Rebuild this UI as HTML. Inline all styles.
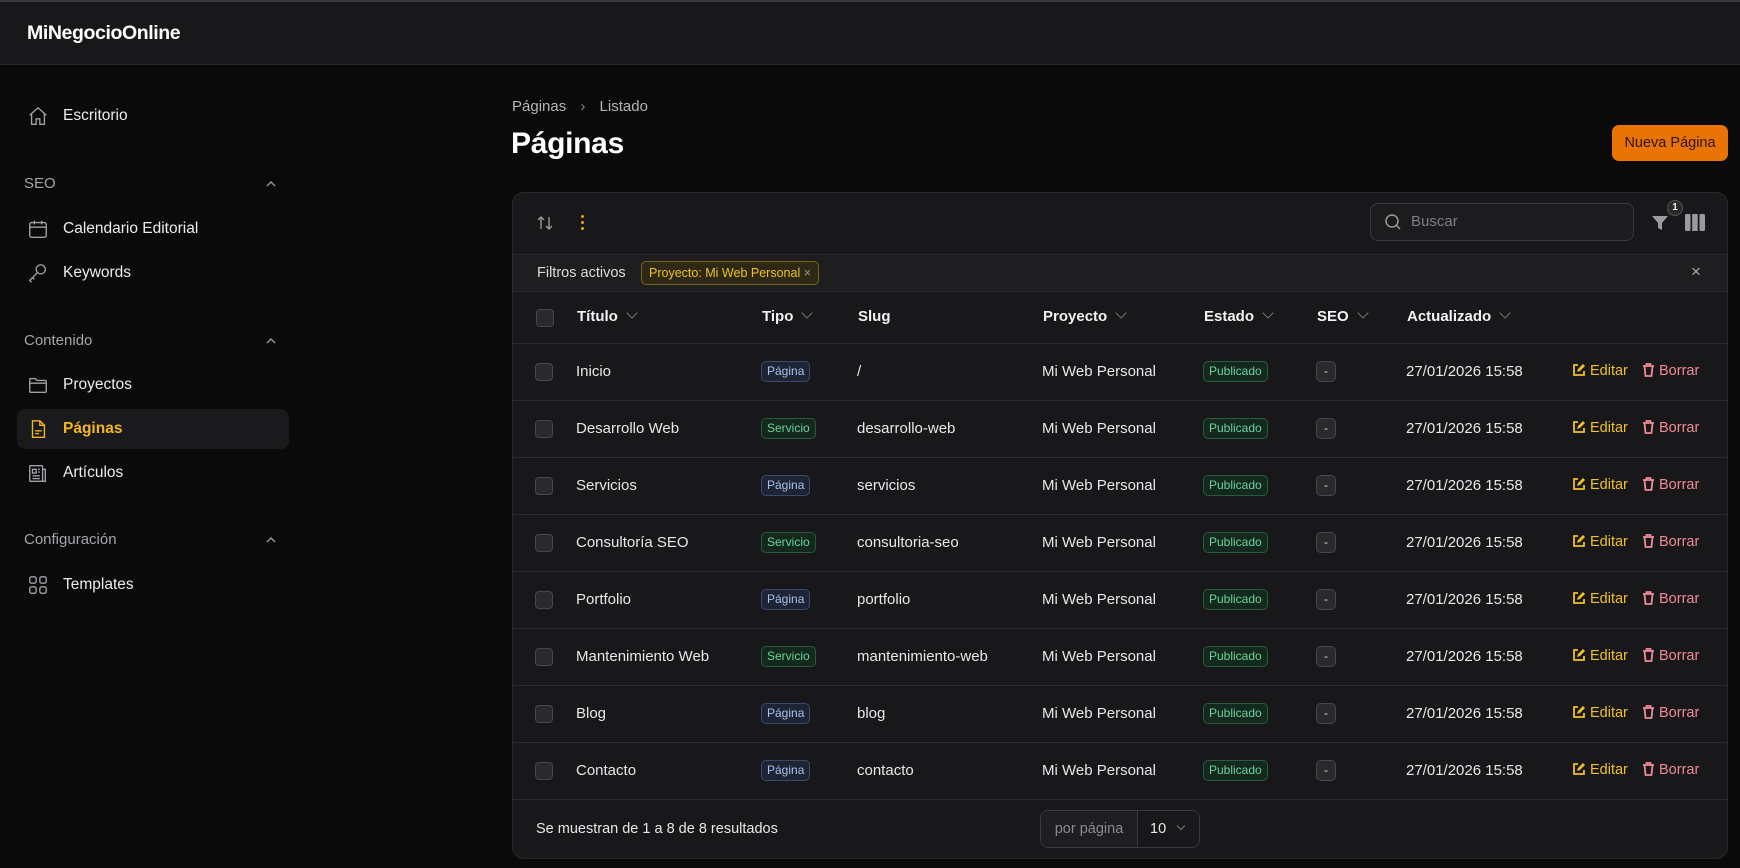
<!DOCTYPE html>
<html><head><meta charset="utf-8"><style>
*{box-sizing:border-box;margin:0;padding:0}
body{width:1740px;height:868px;background:#0a0a0b;font-family:"Liberation Sans",sans-serif;color:#e8e8ea;position:relative;overflow:hidden;font-size:15px}
.abs{position:absolute}
.top{left:0;top:0;width:1740px;height:65px;background:#18181a;border-top:2px solid #3a3a3d;border-bottom:1px solid #26262a}
.logo{left:27px;top:22px;font-size:19.5px;font-weight:bold;color:#fff;letter-spacing:-0.4px}
.nav{left:27px;display:flex;align-items:center;gap:14px;font-size:15.5px;color:#ececee;height:24px}
.nav svg{width:22px;height:22px;fill:none;stroke:#a0a0a6;stroke-width:1.5}
.grp{left:24px;font-size:15px;color:#a5a5ab}
.chev{left:265px;width:12px;height:12px}
.act{left:17px;top:409px;width:272px;height:40px;background:#1a1a1c;border-radius:8px}
.card{left:512px;top:192px;width:1216px;height:667px;background:#18181a;border:1px solid #2a2a2d;border-radius:12px;overflow:hidden}
.row{position:absolute;left:0;width:1216px;border-top:1px solid #2a2a2d}
.cb{position:absolute;left:23px;width:18px;height:18px;border:1px solid #47474c;border-radius:4px;background:#2a2a2d}
.c{position:absolute;white-space:nowrap}
.b{display:inline-block;font-size:12px;padding:2px 5px;border-radius:5px;line-height:15px}
.pg{background:#1d2535;border:1px solid #3a4a6a;color:#a9c0ea}
.sv{background:#14291e;border:1px solid #2a5a3e;color:#6bd39a}
.pu{background:#14291e;border:1px solid #2a5a3e;color:#6bd39a}
.se{background:#2a2a2d;border:1px solid #47474c;color:#ddd;padding:2px 7px}
.hd{font-weight:bold;color:#f2f2f4}
.sc{display:inline-block;width:8px;height:8px;border-right:1.3px solid #777;border-bottom:1.3px solid #777;transform:rotate(45deg);margin-left:10px;position:relative;top:-4px}
.ed{color:#f0c02a;font-size:14.5px}
.br{color:#f08a94;font-size:14.5px}
.ed svg,.br svg{vertical-align:-2px;margin-right:4px}
</style></head><body>
<div class="abs top"></div>
<div class="abs logo">MiNegocioOnline</div>

<div class="abs act"></div>
<div class="abs nav" style="top:104px"><svg viewBox="0 0 24 24"><path d="M3 11l9-8 9 8M5 9.5V21h5v-6h4v6h5V9.5"/></svg>Escritorio</div>
<div class="abs grp" style="top:175px">SEO</div>
<svg class="abs chev" style="top:178px" viewBox="0 0 12 12"><path d="M2 8l4-4 4 4" stroke="#999" stroke-width="1.4" fill="none"/></svg>
<div class="abs nav" style="top:217px"><svg viewBox="0 0 24 24"><rect x="3" y="5" width="18" height="16" rx="2"/><path d="M3 10h18M8 3v4M16 3v4"/></svg>Calendario Editorial</div>
<div class="abs nav" style="top:261px"><svg viewBox="0 0 24 24"><circle cx="15" cy="8" r="5"/><path d="M11.5 11.5L3 20l2 2M6 17l2 2"/></svg>Keywords</div>
<div class="abs grp" style="top:332px">Contenido</div>
<svg class="abs chev" style="top:335px" viewBox="0 0 12 12"><path d="M2 8l4-4 4 4" stroke="#999" stroke-width="1.4" fill="none"/></svg>
<div class="abs nav" style="top:373px"><svg viewBox="0 0 24 24"><path d="M3 6a1 1 0 011-1h5l2 2h9a1 1 0 011 1v11a1 1 0 01-1 1H4a1 1 0 01-1-1z M3 10h18"/></svg>Proyectos</div>
<div class="abs nav" style="top:417px;color:#f3b81f;font-weight:bold"><svg viewBox="0 0 24 24" style="stroke:#f3b81f"><path d="M6 3h8l5 5v13H6z M14 3v5h5 M9 14h7M9 17h4"/></svg>Páginas</div>
<div class="abs nav" style="top:461px"><svg viewBox="0 0 24 24"><rect x="3" y="4" width="14" height="17" rx="1"/><path d="M17 8h3v13h-3M6 8h4v4H6zM12 8h2M12 11h2M6 15h8M6 18h8"/></svg>Artículos</div>
<div class="abs grp" style="top:531px">Configuración</div>
<svg class="abs chev" style="top:534px" viewBox="0 0 12 12"><path d="M2 8l4-4 4 4" stroke="#999" stroke-width="1.4" fill="none"/></svg>
<div class="abs nav" style="top:573px"><svg viewBox="0 0 24 24"><rect x="3" y="3" width="7" height="7" rx="2"/><rect x="14" y="3" width="7" height="7" rx="2"/><rect x="3" y="14" width="7" height="7" rx="2"/><rect x="14" y="14" width="7" height="7" rx="2"/></svg>Templates</div>

<div class="abs" style="left:512px;top:98px;font-size:15px;color:#b5b5ba">Páginas <span style="margin:0 10px;color:#888">›</span> Listado</div>
<div class="abs" style="left:511px;top:127px;font-size:30px;font-weight:bold;color:#fff;letter-spacing:-0.3px">Páginas</div>
<div class="abs" style="left:1612px;top:125px;width:116px;height:36px;background:#ea7306;border-radius:7px;color:#2b1504;font-size:14.5px;text-align:center;line-height:36px">Nueva Página</div>

<div class="abs card">
 <svg class="abs" style="left:22px;top:20px" width="20" height="20" viewBox="0 0 20 20"><path d="M6 16V4M3 7l3-3 3 3M14 4v12M11 13l3 3 3-3" stroke="#999" stroke-width="1.4" fill="none"/></svg>
 <div class="abs" style="left:68px;top:22px;width:3px"><div style="width:3px;height:3px;background:#e8a317;border-radius:2px;margin-bottom:3px"></div><div style="width:3px;height:3px;background:#e8a317;border-radius:2px;margin-bottom:3px"></div><div style="width:3px;height:3px;background:#e8a317;border-radius:2px"></div></div>
 <div class="abs" style="left:857px;top:10px;width:264px;height:38px;border:1px solid #3a3a3e;border-radius:8px;background:#1c1c1f"></div>
 <svg class="abs" style="left:871px;top:20px" width="18" height="18" viewBox="0 0 18 18"><circle cx="8" cy="8" r="6" stroke="#999" stroke-width="1.5" fill="none"/><path d="M12.5 12.5L16 16" stroke="#999" stroke-width="1.5"/></svg>
 <div class="abs" style="left:898px;top:20px;color:#7e7e84;font-size:15px">Buscar</div>
 <svg class="abs" style="left:1137px;top:20px" width="20" height="20" viewBox="0 0 20 20"><path d="M2 3h16l-6 7v7l-4-2v-5z" fill="#9a9aa0"/></svg>
 <div class="abs" style="left:1154px;top:7px;width:16px;height:16px;border-radius:8px;background:#2a2a2d;border:1px solid #555;font-size:10px;text-align:center;line-height:14px;font-weight:bold;color:#eee">1</div>
 <svg class="abs" style="left:1172px;top:21px" width="20" height="17" viewBox="0 0 20 17"><rect x="0" y="0" width="5.5" height="17" rx="1.5" fill="#9a9aa0"/><rect x="7.2" y="0" width="5.5" height="17" fill="#9a9aa0"/><rect x="14.5" y="0" width="5.5" height="17" rx="1.5" fill="#9a9aa0"/></svg>

 <div class="row" style="top:61px;height:37px;background:#1e1e21">
  <div class="c" style="left:24px;top:10px;font-size:14.5px;color:#ddd">Filtros activos</div>
  <div class="c" style="left:128px;top:6px;height:24px;padding:0 7px;border:1px solid #7a6318;background:#2e2914;border-radius:5px;color:#f0c02a;font-size:12.5px;line-height:22px">Proyecto: Mi Web Personal <span style="color:#999">×</span></div>
  <div class="c" style="left:1178px;top:7px;color:#aaa;font-size:17px">×</div>
 </div>
 <div class="row" style="top:98px;height:53px;">
  <div class="cb" style="top:17px"></div>
  <div class="c hd" style="left:64px;top:16px">Título<span class="sc"></span></div>
  <div class="c hd" style="left:249px;top:16px">Tipo<span class="sc"></span></div>
  <div class="c hd" style="left:345px;top:16px">Slug</div>
  <div class="c hd" style="left:530px;top:16px">Proyecto<span class="sc"></span></div>
  <div class="c hd" style="left:691px;top:16px">Estado<span class="sc"></span></div>
  <div class="c hd" style="left:804px;top:16px">SEO<span class="sc"></span></div>
  <div class="c hd" style="left:894px;top:16px">Actualizado<span class="sc"></span></div>
 </div>
</div>
<div id="rows"></div>
<div class="abs" style="left:512px;top:192px;width:1216px;height:667px;pointer-events:none">
 <div class="row" style="top:151px;height:57px"><div class="cb" style="top:19px"></div><div class="c" style="left:64px;top:19px">Inicio</div><div class="c" style="left:249px;top:17px"><span class="b pg">Página</span></div><div class="c" style="left:345px;top:19px">/</div><div class="c" style="left:530px;top:19px">Mi Web Personal</div><div class="c" style="left:691px;top:17px"><span class="b pu">Publicado</span></div><div class="c" style="left:804px;top:17px"><span class="b se">-</span></div><div class="c" style="left:894px;top:19px">27/01/2026 15:58</div><div class="c ed" style="left:1060px;top:19px"><svg width="14" height="14" viewBox="0 0 14 14"><path d="M6 2H2v10h10V8" stroke="#f0c02a" stroke-width="1.8" fill="none"/><path d="M5 9l1-3 5-5 2 2-5 5z" fill="#f0c02a"/></svg>Editar</div><div class="c br" style="left:1130px;top:19px"><svg width="13" height="14" viewBox="0 0 13 14"><path d="M1 3h11M4.5 3V1h4v2M2.5 3l1 10h6l1-10" stroke="#f08a94" stroke-width="1.8" fill="none"/></svg>Borrar</div></div>
 <div class="row" style="top:208px;height:57px"><div class="cb" style="top:19px"></div><div class="c" style="left:64px;top:19px">Desarrollo Web</div><div class="c" style="left:249px;top:17px"><span class="b sv">Servicio</span></div><div class="c" style="left:345px;top:19px">desarrollo-web</div><div class="c" style="left:530px;top:19px">Mi Web Personal</div><div class="c" style="left:691px;top:17px"><span class="b pu">Publicado</span></div><div class="c" style="left:804px;top:17px"><span class="b se">-</span></div><div class="c" style="left:894px;top:19px">27/01/2026 15:58</div><div class="c ed" style="left:1060px;top:19px"><svg width="14" height="14" viewBox="0 0 14 14"><path d="M6 2H2v10h10V8" stroke="#f0c02a" stroke-width="1.8" fill="none"/><path d="M5 9l1-3 5-5 2 2-5 5z" fill="#f0c02a"/></svg>Editar</div><div class="c br" style="left:1130px;top:19px"><svg width="13" height="14" viewBox="0 0 13 14"><path d="M1 3h11M4.5 3V1h4v2M2.5 3l1 10h6l1-10" stroke="#f08a94" stroke-width="1.8" fill="none"/></svg>Borrar</div></div>
 <div class="row" style="top:265px;height:57px"><div class="cb" style="top:19px"></div><div class="c" style="left:64px;top:19px">Servicios</div><div class="c" style="left:249px;top:17px"><span class="b pg">Página</span></div><div class="c" style="left:345px;top:19px">servicios</div><div class="c" style="left:530px;top:19px">Mi Web Personal</div><div class="c" style="left:691px;top:17px"><span class="b pu">Publicado</span></div><div class="c" style="left:804px;top:17px"><span class="b se">-</span></div><div class="c" style="left:894px;top:19px">27/01/2026 15:58</div><div class="c ed" style="left:1060px;top:19px"><svg width="14" height="14" viewBox="0 0 14 14"><path d="M6 2H2v10h10V8" stroke="#f0c02a" stroke-width="1.8" fill="none"/><path d="M5 9l1-3 5-5 2 2-5 5z" fill="#f0c02a"/></svg>Editar</div><div class="c br" style="left:1130px;top:19px"><svg width="13" height="14" viewBox="0 0 13 14"><path d="M1 3h11M4.5 3V1h4v2M2.5 3l1 10h6l1-10" stroke="#f08a94" stroke-width="1.8" fill="none"/></svg>Borrar</div></div>
 <div class="row" style="top:322px;height:57px"><div class="cb" style="top:19px"></div><div class="c" style="left:64px;top:19px">Consultoría SEO</div><div class="c" style="left:249px;top:17px"><span class="b sv">Servicio</span></div><div class="c" style="left:345px;top:19px">consultoria-seo</div><div class="c" style="left:530px;top:19px">Mi Web Personal</div><div class="c" style="left:691px;top:17px"><span class="b pu">Publicado</span></div><div class="c" style="left:804px;top:17px"><span class="b se">-</span></div><div class="c" style="left:894px;top:19px">27/01/2026 15:58</div><div class="c ed" style="left:1060px;top:19px"><svg width="14" height="14" viewBox="0 0 14 14"><path d="M6 2H2v10h10V8" stroke="#f0c02a" stroke-width="1.8" fill="none"/><path d="M5 9l1-3 5-5 2 2-5 5z" fill="#f0c02a"/></svg>Editar</div><div class="c br" style="left:1130px;top:19px"><svg width="13" height="14" viewBox="0 0 13 14"><path d="M1 3h11M4.5 3V1h4v2M2.5 3l1 10h6l1-10" stroke="#f08a94" stroke-width="1.8" fill="none"/></svg>Borrar</div></div>
 <div class="row" style="top:379px;height:57px"><div class="cb" style="top:19px"></div><div class="c" style="left:64px;top:19px">Portfolio</div><div class="c" style="left:249px;top:17px"><span class="b pg">Página</span></div><div class="c" style="left:345px;top:19px">portfolio</div><div class="c" style="left:530px;top:19px">Mi Web Personal</div><div class="c" style="left:691px;top:17px"><span class="b pu">Publicado</span></div><div class="c" style="left:804px;top:17px"><span class="b se">-</span></div><div class="c" style="left:894px;top:19px">27/01/2026 15:58</div><div class="c ed" style="left:1060px;top:19px"><svg width="14" height="14" viewBox="0 0 14 14"><path d="M6 2H2v10h10V8" stroke="#f0c02a" stroke-width="1.8" fill="none"/><path d="M5 9l1-3 5-5 2 2-5 5z" fill="#f0c02a"/></svg>Editar</div><div class="c br" style="left:1130px;top:19px"><svg width="13" height="14" viewBox="0 0 13 14"><path d="M1 3h11M4.5 3V1h4v2M2.5 3l1 10h6l1-10" stroke="#f08a94" stroke-width="1.8" fill="none"/></svg>Borrar</div></div>
 <div class="row" style="top:436px;height:57px"><div class="cb" style="top:19px"></div><div class="c" style="left:64px;top:19px">Mantenimiento Web</div><div class="c" style="left:249px;top:17px"><span class="b sv">Servicio</span></div><div class="c" style="left:345px;top:19px">mantenimiento-web</div><div class="c" style="left:530px;top:19px">Mi Web Personal</div><div class="c" style="left:691px;top:17px"><span class="b pu">Publicado</span></div><div class="c" style="left:804px;top:17px"><span class="b se">-</span></div><div class="c" style="left:894px;top:19px">27/01/2026 15:58</div><div class="c ed" style="left:1060px;top:19px"><svg width="14" height="14" viewBox="0 0 14 14"><path d="M6 2H2v10h10V8" stroke="#f0c02a" stroke-width="1.8" fill="none"/><path d="M5 9l1-3 5-5 2 2-5 5z" fill="#f0c02a"/></svg>Editar</div><div class="c br" style="left:1130px;top:19px"><svg width="13" height="14" viewBox="0 0 13 14"><path d="M1 3h11M4.5 3V1h4v2M2.5 3l1 10h6l1-10" stroke="#f08a94" stroke-width="1.8" fill="none"/></svg>Borrar</div></div>
 <div class="row" style="top:493px;height:57px"><div class="cb" style="top:19px"></div><div class="c" style="left:64px;top:19px">Blog</div><div class="c" style="left:249px;top:17px"><span class="b pg">Página</span></div><div class="c" style="left:345px;top:19px">blog</div><div class="c" style="left:530px;top:19px">Mi Web Personal</div><div class="c" style="left:691px;top:17px"><span class="b pu">Publicado</span></div><div class="c" style="left:804px;top:17px"><span class="b se">-</span></div><div class="c" style="left:894px;top:19px">27/01/2026 15:58</div><div class="c ed" style="left:1060px;top:19px"><svg width="14" height="14" viewBox="0 0 14 14"><path d="M6 2H2v10h10V8" stroke="#f0c02a" stroke-width="1.8" fill="none"/><path d="M5 9l1-3 5-5 2 2-5 5z" fill="#f0c02a"/></svg>Editar</div><div class="c br" style="left:1130px;top:19px"><svg width="13" height="14" viewBox="0 0 13 14"><path d="M1 3h11M4.5 3V1h4v2M2.5 3l1 10h6l1-10" stroke="#f08a94" stroke-width="1.8" fill="none"/></svg>Borrar</div></div>
 <div class="row" style="top:550px;height:57px"><div class="cb" style="top:19px"></div><div class="c" style="left:64px;top:19px">Contacto</div><div class="c" style="left:249px;top:17px"><span class="b pg">Página</span></div><div class="c" style="left:345px;top:19px">contacto</div><div class="c" style="left:530px;top:19px">Mi Web Personal</div><div class="c" style="left:691px;top:17px"><span class="b pu">Publicado</span></div><div class="c" style="left:804px;top:17px"><span class="b se">-</span></div><div class="c" style="left:894px;top:19px">27/01/2026 15:58</div><div class="c ed" style="left:1060px;top:19px"><svg width="14" height="14" viewBox="0 0 14 14"><path d="M6 2H2v10h10V8" stroke="#f0c02a" stroke-width="1.8" fill="none"/><path d="M5 9l1-3 5-5 2 2-5 5z" fill="#f0c02a"/></svg>Editar</div><div class="c br" style="left:1130px;top:19px"><svg width="13" height="14" viewBox="0 0 13 14"><path d="M1 3h11M4.5 3V1h4v2M2.5 3l1 10h6l1-10" stroke="#f08a94" stroke-width="1.8" fill="none"/></svg>Borrar</div></div>
 <div class="row" style="top:607px;height:60px">
  <div class="c" style="left:24px;top:21px;font-size:14.5px">Se muestran de 1 a 8 de 8 resultados</div>
  <div class="c" style="left:528px;top:10px;width:160px;height:38px;border:1px solid #3a3a3e;border-radius:8px;display:flex;font-size:14.5px;line-height:36px">
   <div style="width:97px;text-align:center;color:#8a8a90;background:#1e1e21;border-right:1px solid #3a3a3e;border-radius:8px 0 0 8px">por página</div>
   <div style="padding-left:12px">10<span class="sc" style="width:6px;height:6px;margin-left:12px"></span></div>
  </div>
 </div>
</div>
</body></html>
